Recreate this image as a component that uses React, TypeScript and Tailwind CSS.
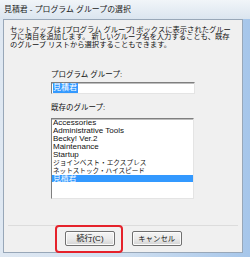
export default function App() {
  const items: { t: string; cls: string; sel?: boolean }[] = [
    { t: "Accessories", cls: "text-[8px]" },
    { t: "Administrative Tools", cls: "text-[8px]" },
    { t: "Becky! Ver.2", cls: "text-[8px]" },
    { t: "Maintenance", cls: "text-[8px]" },
    { t: "Startup", cls: "text-[8px]" },
    { t: "ジョインベスト・エクスプレス", cls: "text-[6.7px]" },
    { t: "ネットストック・ハイスピード", cls: "text-[6.6px]" },
    { t: "見積君", cls: "text-[7.8px]", sel: true },
  ];
  return (
    <div className="relative w-[250px] h-[257px] overflow-hidden flex flex-col bg-[#a9c7e8] text-[#111] [font-family:'Liberation_Sans','Noto_Sans_CJK_JP',sans-serif]">
      <div className="h-[19px] flex items-center pl-[4px] bg-gradient-to-b from-[#f1f5f9] to-[#dbe5ef] text-[7.9px] leading-[10px] text-[#1b1b1b] whitespace-nowrap">
        見積君 - プログラム グループの選択
      </div>
      <div className="flex-1 flex pl-[3px] pr-[7px] pb-[4px] bg-gradient-to-r from-[#dfe8f2] via-[#cfdff0] to-[#a6c6ea]">
        <div className="flex-1 flex flex-col bg-[#f0f0f0] border border-[#98a7b8]">
          <div className="mt-[5.5px] ml-[6px] text-[7.3px] leading-[7.5px] whitespace-nowrap">
            <div>セットアップは [プログラム グループ] ボックスに表示されたグルー</div>
            <div>プに項目を追加します。 新しいグループ名を入力することも、既存</div>
            <div>のグループ リストから選択することもできます。</div>
          </div>
          <div className="mt-[23px] ml-[47px] text-[7.5px] leading-[8px] whitespace-nowrap">
            プログラム グループ:
          </div>
          <div className="mt-[3px] ml-[47px] w-[144px] h-[12px] bg-white border-t border-l border-[#7f7f7f] border-r border-b border-r-[#e4e4e4] border-b-[#e4e4e4] shadow-[inset_0_1px_0_#bdbdbd] flex items-center pl-[0.5px]">
            <span className="bg-[#3399ff] text-white text-[8px] leading-[10px] px-[0.5px]">見積君</span>
          </div>
          <div className="mt-[9.5px] ml-[47px] text-[7.5px] leading-[8px] whitespace-nowrap">
            既存のグループ:
          </div>
          <div className="mt-[6.3px] ml-[47px] w-[143px] h-[81px] bg-white border-t border-l border-[#7f7f7f] border-r border-b border-r-[#e4e4e4] border-b-[#e4e4e4] shadow-[inset_0_1px_0_#bdbdbd] flex flex-col pt-[0.5px]">
            {items.map((it) => (
              <div
                key={it.t}
                className={`h-[7.9px] leading-[7.9px] pl-[1px] whitespace-nowrap ${it.cls} ${
                  it.sel ? "bg-[#3399ff] text-white" : "text-[#111]"
                }`}
              >
                {it.t}
              </div>
            ))}
          </div>
          <div className="mt-[26px] ml-[4px] w-[230px] h-px bg-[#dcdcdc]" />
          <div className="mt-[5.7px] ml-[61px] flex gap-[16.7px]">
            <div className="w-[50px] h-[15px] border border-[#707070] rounded-[2px] bg-gradient-to-b from-[#f4f4f4] via-[#ebebeb] to-[#d4d4d4] shadow-[inset_0_0_0_1px_#fbfbfb] flex items-center justify-center text-[8px] leading-[10px]">
              続行(C)
            </div>
            <div className="w-[50px] h-[15px] border border-[#707070] rounded-[2px] bg-gradient-to-b from-[#f4f4f4] via-[#ebebeb] to-[#d4d4d4] shadow-[inset_0_0_0_1px_#fbfbfb] flex items-center justify-center text-[7.4px] leading-[10px]">
              キャンセル
            </div>
          </div>
        </div>
      </div>
      <div className="absolute left-[55px] top-[225px] w-[68px] h-[28px] border-2 border-[#e5222b] rounded-[4px]" />
    </div>
  );
}
